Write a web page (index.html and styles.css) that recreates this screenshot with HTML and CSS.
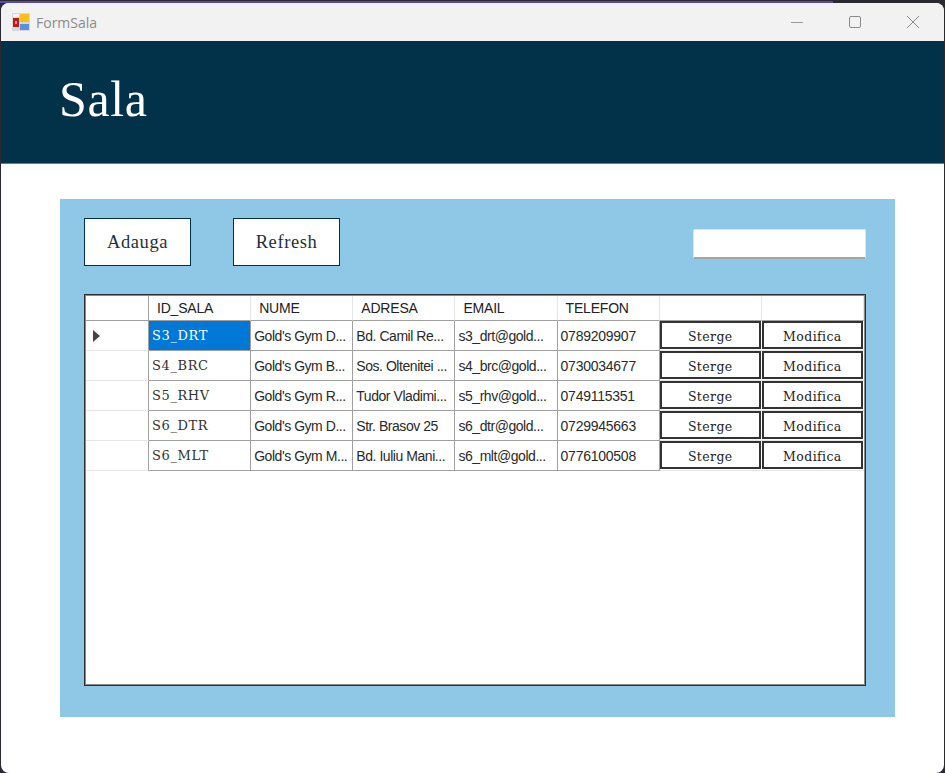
FILE: index.html
```html
<!DOCTYPE html>
<html lang="ro">
<head>
  <meta charset="UTF-8" />
  <title>FormSala</title>
  <link rel="stylesheet" href="styles.css">
</head>
<body>
  <div class="window">
    <div class="titlebar">
      <svg class="app-icon" width="18" height="18" viewBox="0 0 18 18">
        <rect x="0" y="0" width="18" height="18" fill="#d8d8d8"/>
        <rect x="1" y="5" width="6" height="9" fill="#b3201f"/>
        <rect x="3" y="8" width="2" height="3" fill="#e88"/>
        <rect x="8" y="1" width="9" height="8" fill="#f4c01e"/>
        <rect x="8" y="11" width="9" height="6" fill="#5b8fe0"/>
        <rect x="1" y="1" width="6" height="3" fill="#f4f4f4"/>
      </svg>
      <span class="app-name">FormSala</span>
      <div class="win-controls">
        <svg width="14" height="14" viewBox="0 0 14 14"><path d="M1 7.5H13" stroke="#999" stroke-width="1" fill="none"/></svg>
        <svg width="14" height="14" viewBox="0 0 14 14"><rect x="1.5" y="1.5" width="11" height="11" rx="1.5" stroke="#8a8a8a" stroke-width="1" fill="none"/></svg>
        <svg width="14" height="14" viewBox="0 0 14 14"><path d="M1 1L13 13M13 1L1 13" stroke="#8a8a8a" stroke-width="1" fill="none"/></svg>
      </div>
    </div>

    <div class="header"><h1>Sala</h1></div>

    <div class="panel">
      <div class="toolbar">
        <button class="btn" type="button">Adauga</button>
        <button class="btn" type="button">Refresh</button>
        <input class="search" type="text" />
      </div>

      <div class="grid-box">
        <div class="grid">
          <div class="head corner"></div>
          <div class="head">ID_SALA</div>
          <div class="head">NUME</div>
          <div class="head">ADRESA</div>
          <div class="head">EMAIL</div>
          <div class="head">TELEFON</div>
          <div class="head"></div>
          <div class="head"></div>

          <div class="rowhead"><span class="arrow"></span></div>
          <div class="cell id selected">S3_DRT</div>
          <div class="cell">Gold's Gym D...</div>
          <div class="cell">Bd. Camil Re...</div>
          <div class="cell">s3_drt@gold...</div>
          <div class="cell phone">0789209907</div>
          <div class="action"><button type="button">Sterge</button></div>
          <div class="action"><button type="button">Modifica</button></div>

          <div class="rowhead"></div>
          <div class="cell id">S4_BRC</div>
          <div class="cell">Gold's Gym B...</div>
          <div class="cell">Sos. Oltenitei ...</div>
          <div class="cell">s4_brc@gold...</div>
          <div class="cell phone">0730034677</div>
          <div class="action"><button type="button">Sterge</button></div>
          <div class="action"><button type="button">Modifica</button></div>

          <div class="rowhead"></div>
          <div class="cell id">S5_RHV</div>
          <div class="cell">Gold's Gym R...</div>
          <div class="cell">Tudor Vladimi...</div>
          <div class="cell">s5_rhv@gold...</div>
          <div class="cell phone">0749115351</div>
          <div class="action"><button type="button">Sterge</button></div>
          <div class="action"><button type="button">Modifica</button></div>

          <div class="rowhead"></div>
          <div class="cell id">S6_DTR</div>
          <div class="cell">Gold's Gym D...</div>
          <div class="cell">Str. Brasov 25</div>
          <div class="cell">s6_dtr@gold...</div>
          <div class="cell phone">0729945663</div>
          <div class="action"><button type="button">Sterge</button></div>
          <div class="action"><button type="button">Modifica</button></div>

          <div class="rowhead"></div>
          <div class="cell id">S6_MLT</div>
          <div class="cell">Gold's Gym M...</div>
          <div class="cell">Bd. Iuliu Mani...</div>
          <div class="cell">s6_mlt@gold...</div>
          <div class="cell phone">0776100508</div>
          <div class="action"><button type="button">Sterge</button></div>
          <div class="action"><button type="button">Modifica</button></div>
        </div>
      </div>
    </div>
  </div>
</body>
</html>
```

FILE: styles.css
```css
html, body {
  margin: 0;
  height: 100%;
}
body {
  background: linear-gradient(90deg, #5a48b5 833px, #2b2a33 833px) no-repeat 0 1px / 100% 2px, #2b2a33;
  padding: 3px 1px 0 1px;
  box-sizing: border-box;
  overflow: hidden;
  font-family: "Liberation Sans", sans-serif;
}
.window {
  height: 770px;
  background-color: #fff;
  border-radius: 8px;
  overflow: hidden;
}
.titlebar {
  display: flex;
  align-items: center;
  height: 38px;
  background-color: #f2f2f2;
  padding-left: 11px;
}
.app-icon {
  margin-right: 6px;
}
.app-name {
  font-family: "Open Sans", sans-serif;
  font-size: 14px;
  color: #8b8b8b;
}
.win-controls {
  display: flex;
  gap: 44px;
  margin-left: auto;
  margin-right: 24px;
}
.header {
  display: flex;
  align-items: center;
  height: 123px;
  background-color: #02314a;
  border-bottom: 1px solid #5f7f92;
  box-sizing: border-box;
  padding-left: 58px;
}
.header h1 {
  margin: 0 0 7px 0;
  font-family: "Liberation Serif", serif;
  font-weight: normal;
  font-size: 50px;
  letter-spacing: 0.6px;
  color: #fff;
}
.panel {
  margin: 35px 49px 0 59px;
  height: 518px;
  box-sizing: border-box;
  padding: 19px 29px 0 24px;
  background-color: #8ec8e6;
}
.toolbar {
  display: flex;
  align-items: flex-start;
  gap: 42px;
  height: 48px;
}
.btn {
  width: 107px;
  height: 48px;
  background-color: #fff;
  border: 1px solid #02314a;
  border-radius: 0;
  font-family: "Liberation Serif", serif;
  font-size: 18.5px;
  letter-spacing: 0.6px;
  color: #1f2f3a;
  padding: 0;
}
.search {
  width: 173px;
  height: 30px;
  margin: 11px 0 0 auto;
  box-sizing: border-box;
  border: 1px solid #e4e4e4;
  border-bottom: 2px solid #a5a5a5;
  border-radius: 2px;
  background-color: #fff;
  padding: 0;
}
.grid-box {
  margin-top: 28px;
  height: 392px;
  box-sizing: border-box;
  border: 1px solid #2f2f2f;
  padding: 1px;
  box-shadow: inset 0 0 0 1px #8a8a8a;
  background-color: #fff;
}
.grid {
  display: grid;
  grid-template-columns: 63px repeat(7, 1fr);
  grid-template-rows: 25px repeat(5, 30px);
  width: 778px;
}
.head {
  box-sizing: border-box;
  border-right: 1px solid #e6e6e6;
  border-bottom: 1px solid #a0a0a0;
  padding: 4px 0 0 8px;
  font-size: 14px;
  letter-spacing: -0.2px;
  color: #222;
  white-space: nowrap;
}
.corner {
  border-right-color: #a0a0a0;
}
.rowhead {
  display: flex;
  align-items: center;
  box-sizing: border-box;
  border-right: 1px solid #a0a0a0;
  border-bottom: 1px solid #e6e6e6;
  padding-left: 7px;
}
.arrow {
  width: 0;
  height: 0;
  border-left: 7px solid #444;
  border-top: 6px solid transparent;
  border-bottom: 6px solid transparent;
}
.cell {
  display: flex;
  align-items: center;
  box-sizing: border-box;
  border-right: 1px solid #a0a0a0;
  border-bottom: 1px solid #a0a0a0;
  padding: 0 0 0 3px;
  font-size: 14px;
  letter-spacing: -0.45px;
  color: #2a2a2a;
  white-space: nowrap;
  overflow: hidden;
}
.cell.phone {
  letter-spacing: -0.25px;
}
.cell.id {
  font-family: "DejaVu Serif", serif;
  font-size: 13px;
  letter-spacing: 0.6px;
  color: #333;
}
.cell.selected {
  background-color: #0078d7;
  color: #fff;
}
.action {
  box-sizing: border-box;
  padding: 0 1px 1px 0;
  border-bottom: 1px solid #e6e6e6;
}
.action button {
  display: block;
  width: 100%;
  height: 100%;
  box-sizing: border-box;
  background-color: #fff;
  border: 2px solid #333;
  border-radius: 0;
  padding: 2px 0 0 0;
  font-family: "DejaVu Serif", serif;
  font-size: 12.5px;
  letter-spacing: 0.4px;
  color: #222;
}
```
